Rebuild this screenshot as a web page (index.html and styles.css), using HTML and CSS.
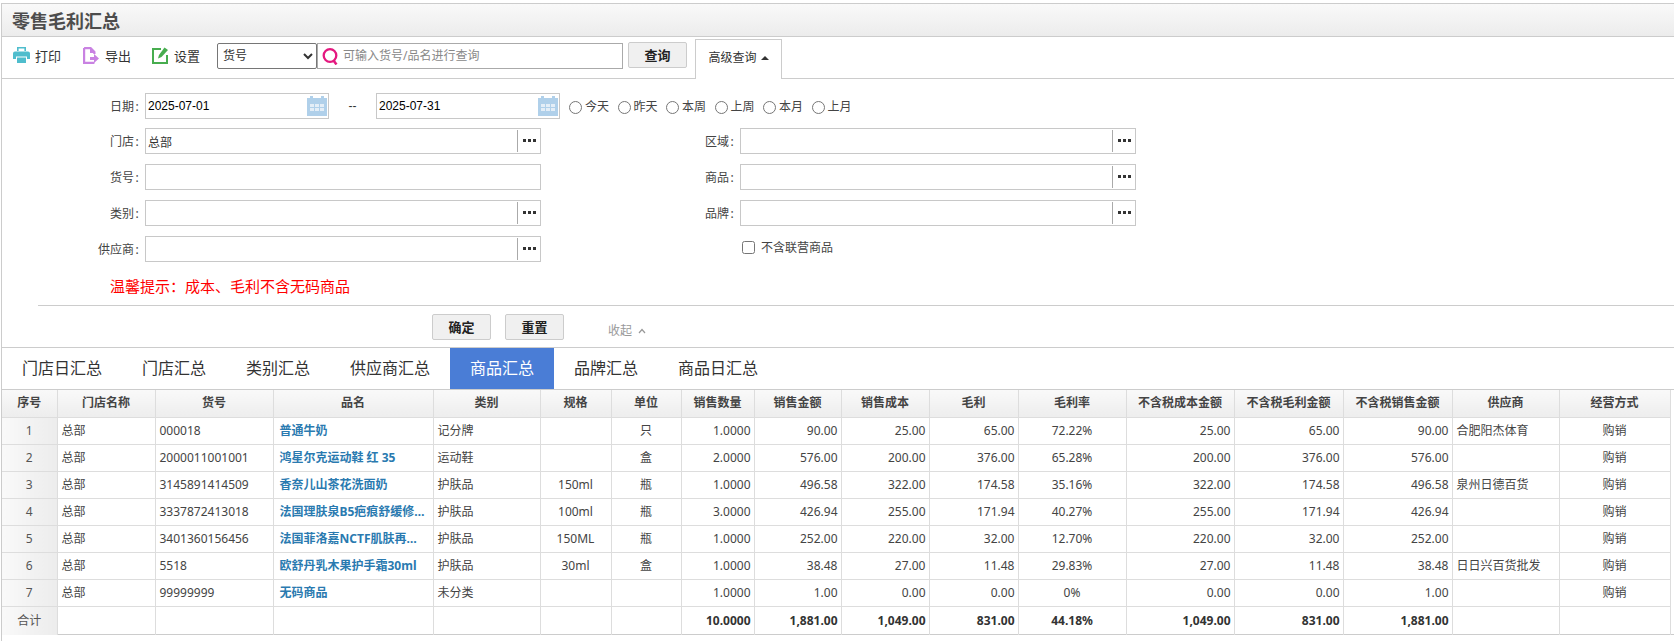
FILE: index.html
```html
<!DOCTYPE html>
<html lang="zh-CN">
<head>
<meta charset="utf-8">
<title>零售毛利汇总</title>
<link rel="stylesheet" href="styles.css">
</head>
<body>
<div class="page">
  <header class="title-bar"><h1 class="title">零售毛利汇总</h1></header>

  <div class="toolbar">
    <a class="tool tool-print">
      <svg class="tool-icon" width="17" height="16" viewBox="0 0 17 16"><path fill="#4fbdcd" d="M4 0h9v4h-1.600V1.500H5.600V4H4zM2 4.500h13a2 2 0 0 1 2 2V12h-3V9.500H3V12H0V6.500a2 2 0 0 1 2-2zM4 10.500h9V16H4z"/></svg>
      <span>打印</span>
    </a>
    <a class="tool tool-export">
      <svg class="tool-icon" width="16" height="17" viewBox="0 0 16 17"><path fill="none" stroke="#c982e2" stroke-width="2.200" d="M1.100 1.100h6.500l3.800 3.800v2M11.400 15.900H1.100V1.100"/><path fill="#c982e2" d="M7 1l5 5H7zM7 10h4V7l5 4.500-5 4.500v-3H7z"/></svg>
      <span>导出</span>
    </a>
    <a class="tool tool-set">
      <svg class="tool-icon" width="17" height="17" viewBox="0 0 17 17"><path fill="none" stroke="#47ad4f" stroke-width="2" d="M9 2H1v14h14V8"/><path fill="#47ad4f" d="M12.500.5L16 3 9.500 10 6 11.500 7 8z"/></svg>
      <span>设置</span>
    </a>
    <select class="search-type"><option>货号</option></select>
    <div class="search-box">
      <svg class="search-icon" width="17" height="17" viewBox="0 0 17 17"><circle cx="8" cy="7.500" r="6.300" fill="none" stroke="#e4187f" stroke-width="2.300"/><path d="M11.500 12.500l3 4" stroke="#e4187f" stroke-width="2.500" fill="none"/></svg>
      <input class="search-input" type="text" placeholder="可输入货号/品名进行查询">
    </div>
    <button class="btn btn-query">查询</button>
    <div class="adv-tab">高级查询<span class="caret"></span></div>
  </div>

  <form class="query">
    <div class="row row-date">
      <label class="lbl">日期<span class="colon">:</span></label>
      <div class="field field-date">
        <input class="text date-text" type="text" value="2025-07-01">
        <svg class="cal" width="20" height="20" viewBox="0 0 20 20"><path fill="#b0d0ea" d="M0 2h3V0h3v2h8V0h3v2h3v18H0z"/><path fill="#e4eef7" d="M3 8h4v3H3zM8 8h4v3H8zM13 8h4v3h-4zM3 12h4v3H3zM8 12h4v3H8zM13 12h4v3h-4z"/></svg>
      </div>
      <span class="dash">--</span>
      <div class="field field-date">
        <input class="text date-text" type="text" value="2025-07-31">
        <svg class="cal" width="20" height="20" viewBox="0 0 20 20"><path fill="#b0d0ea" d="M0 2h3V0h3v2h8V0h3v2h3v18H0z"/><path fill="#e4eef7" d="M3 8h4v3H3zM8 8h4v3H8zM13 8h4v3h-4zM3 12h4v3H3zM8 12h4v3H8zM13 12h4v3h-4z"/></svg>
      </div>
      <div class="quick">
        <label class="radio"><input type="radio" name="q"><span>今天</span></label>
        <label class="radio"><input type="radio" name="q"><span>昨天</span></label>
        <label class="radio"><input type="radio" name="q"><span>本周</span></label>
        <label class="radio"><input type="radio" name="q"><span>上周</span></label>
        <label class="radio"><input type="radio" name="q"><span>本月</span></label>
        <label class="radio"><input type="radio" name="q"><span>上月</span></label>
      </div>
    </div>

    <div class="row">
      <label class="lbl">门店<span class="colon">:</span></label>
      <div class="field field-wide"><input class="text" type="text" value="总部"><span class="more"><i></i><i></i><i></i></span></div>
      <label class="lbl lbl-right">区域<span class="colon">:</span></label>
      <div class="field field-wide"><input class="text" type="text"><span class="more"><i></i><i></i><i></i></span></div>
    </div>
    <div class="row">
      <label class="lbl">货号<span class="colon">:</span></label>
      <div class="field field-wide"><input class="text" type="text"></div>
      <label class="lbl lbl-right">商品<span class="colon">:</span></label>
      <div class="field field-wide"><input class="text" type="text"><span class="more"><i></i><i></i><i></i></span></div>
    </div>
    <div class="row">
      <label class="lbl">类别<span class="colon">:</span></label>
      <div class="field field-wide"><input class="text" type="text"><span class="more"><i></i><i></i><i></i></span></div>
      <label class="lbl lbl-right">品牌<span class="colon">:</span></label>
      <div class="field field-wide"><input class="text" type="text"><span class="more"><i></i><i></i><i></i></span></div>
    </div>
    <div class="row">
      <label class="lbl">供应商<span class="colon">:</span></label>
      <div class="field field-wide"><input class="text" type="text"><span class="more"><i></i><i></i><i></i></span></div>
      <label class="check"><input type="checkbox"><span>不含联营商品</span></label>
    </div>

    <p class="tip">温馨提示：成本、毛利不含无码商品</p>

    <div class="actions">
      <button class="btn btn-act" type="button">确定</button>
      <button class="btn btn-act" type="button">重置</button>
      <a class="collapse">收起<svg class="chev" width="8" height="6" viewBox="0 0 8 6"><path d="M1 5l3-3.500L7 5" fill="none" stroke="#999" stroke-width="1.200"/></svg></a>
    </div>
  </form>

  <nav class="tabs">
    <a class="tab">门店日汇总</a>
    <a class="tab">门店汇总</a>
    <a class="tab">类别汇总</a>
    <a class="tab">供应商汇总</a>
    <a class="tab active">商品汇总</a>
    <a class="tab">品牌汇总</a>
    <a class="tab">商品日汇总</a>
  </nav>

  <div class="grid-wrap">
  <table class="grid">
    <colgroup>
      <col class="c1"><col class="c2"><col class="c3"><col class="c4"><col class="c5"><col class="c6"><col class="c7"><col class="c8"><col class="c9"><col class="c10"><col class="c11"><col class="c12"><col class="c13"><col class="c14"><col class="c15"><col class="c16"><col class="c17">
    </colgroup>
    <thead>
      <tr><th>序号</th><th>门店名称</th><th>货号</th><th>品名</th><th>类别</th><th>规格</th><th>单位</th><th>销售数量</th><th>销售金额</th><th>销售成本</th><th>毛利</th><th>毛利率</th><th>不含税成本金额</th><th>不含税毛利金额</th><th>不含税销售金额</th><th>供应商</th><th>经营方式</th></tr>
    </thead>
    <tbody>
      <tr><td class="seq">1</td><td>总部</td><td>000018</td><td class="name">普通牛奶</td><td>记分牌</td><td class="ctr"></td><td class="ctr">只</td><td class="num">1.0000</td><td class="num">90.00</td><td class="num">25.00</td><td class="num">65.00</td><td class="ctr">72.22%</td><td class="num">25.00</td><td class="num">65.00</td><td class="num">90.00</td><td>合肥阳杰体育</td><td class="ctr">购销</td></tr>
      <tr><td class="seq">2</td><td>总部</td><td>2000011001001</td><td class="name">鸿星尔克运动鞋 红 35</td><td>运动鞋</td><td class="ctr"></td><td class="ctr">盒</td><td class="num">2.0000</td><td class="num">576.00</td><td class="num">200.00</td><td class="num">376.00</td><td class="ctr">65.28%</td><td class="num">200.00</td><td class="num">376.00</td><td class="num">576.00</td><td></td><td class="ctr">购销</td></tr>
      <tr><td class="seq">3</td><td>总部</td><td>3145891414509</td><td class="name">香奈儿山茶花洗面奶</td><td>护肤品</td><td class="ctr">150ml</td><td class="ctr">瓶</td><td class="num">1.0000</td><td class="num">496.58</td><td class="num">322.00</td><td class="num">174.58</td><td class="ctr">35.16%</td><td class="num">322.00</td><td class="num">174.58</td><td class="num">496.58</td><td>泉州日德百货</td><td class="ctr">购销</td></tr>
      <tr><td class="seq">4</td><td>总部</td><td>3337872413018</td><td class="name">法国理肤泉B5疤痕舒缓修…</td><td>护肤品</td><td class="ctr">100ml</td><td class="ctr">瓶</td><td class="num">3.0000</td><td class="num">426.94</td><td class="num">255.00</td><td class="num">171.94</td><td class="ctr">40.27%</td><td class="num">255.00</td><td class="num">171.94</td><td class="num">426.94</td><td></td><td class="ctr">购销</td></tr>
      <tr><td class="seq">5</td><td>总部</td><td>3401360156456</td><td class="name">法国菲洛嘉NCTF肌肤再…</td><td>护肤品</td><td class="ctr">150ML</td><td class="ctr">瓶</td><td class="num">1.0000</td><td class="num">252.00</td><td class="num">220.00</td><td class="num">32.00</td><td class="ctr">12.70%</td><td class="num">220.00</td><td class="num">32.00</td><td class="num">252.00</td><td></td><td class="ctr">购销</td></tr>
      <tr><td class="seq">6</td><td>总部</td><td>5518</td><td class="name">欧舒丹乳木果护手霜30ml</td><td>护肤品</td><td class="ctr">30ml</td><td class="ctr">盒</td><td class="num">1.0000</td><td class="num">38.48</td><td class="num">27.00</td><td class="num">11.48</td><td class="ctr">29.83%</td><td class="num">27.00</td><td class="num">11.48</td><td class="num">38.48</td><td>日日兴百货批发</td><td class="ctr">购销</td></tr>
      <tr><td class="seq">7</td><td>总部</td><td>99999999</td><td class="name">无码商品</td><td>未分类</td><td class="ctr"></td><td class="ctr"></td><td class="num">1.0000</td><td class="num">1.00</td><td class="num">0.00</td><td class="num">0.00</td><td class="ctr">0%</td><td class="num">0.00</td><td class="num">0.00</td><td class="num">1.00</td><td></td><td class="ctr">购销</td></tr>
    </tbody>
    <tfoot>
      <tr><td class="seq">合计</td><td></td><td></td><td></td><td></td><td></td><td></td><td class="num">10.0000</td><td class="num">1,881.00</td><td class="num">1,049.00</td><td class="num">831.00</td><td class="ctr">44.18%</td><td class="num">1,049.00</td><td class="num">831.00</td><td class="num">1,881.00</td><td></td><td></td></tr>
    </tfoot>
  </table>
  </div>
</div>
</body>
</html>
```
FILE: styles.css
```css
* { box-sizing: border-box; }
html, body { margin: 0; padding: 0; background: #fff; }
body {
  font-family: "Noto Sans", "Noto Sans CJK SC", sans-serif;
  font-size: 12px;
  color: #444;
  overflow: hidden;
}
.page {
  margin: 3px 0 0 1px;
  border-left: 1px solid #ccc;
  height: 638px;
}

/* title */
.title-bar {
  height: 34px;
  margin-left: -1px;
  border-top: 1px solid #ccc;
  border-bottom: 1px solid #ccc;
  border-left: 1px solid #ccc;
  background: linear-gradient(#f9f9f9, #ececec);
  padding-left: 10px;
}
.title {
  margin: 0;
  font-size: 18px;
  line-height: 34px;
  font-weight: 700;
  color: #4d4d4d;
}

/* toolbar */
.toolbar {
  height: 42px;
  border-bottom: 1px solid #ccc;
  display: flex;
  align-items: flex-start;
  position: relative;
}
.tool {
  display: flex;
  align-items: center;
  height: 20px;
  margin-top: 8px;
  font-size: 13px;
  color: #333;
}
.tool-print { margin-left: 11px; }
.tool-export { margin-left: 22px; }
.tool-set { margin-left: 21px; }
.tool-icon { flex: none; margin-right: 5px; }
.tool-export .tool-icon { margin-right: 6px; }
.search-type {
  width: 100px;
  height: 26px;
  margin: 6px 0 0 17px;
  font-family: inherit;
  font-size: 12px;
  color: #333;
  background: #fff;
  border: 1px solid #767676;
  border-radius: 2px;
  padding: 0 0 2px 1px;
}
.search-box {
  width: 306px;
  height: 26px;
  margin-top: 6px;
  border: 1px solid #aaa;
  display: flex;
  align-items: center;
  background: #fff;
}
.search-icon { flex: none; margin: 0 4px 0 4px; }
.search-input {
  flex: 1;
  min-width: 0;
  border: 0;
  outline: 0;
  padding: 0 0 1px;
  font-family: inherit;
  font-size: 12px;
}
.search-input::placeholder { color: #888; opacity: 1; }
.btn {
  font-family: inherit;
  font-weight: 700;
  color: #222;
  background: #f0f0f0;
  border: 1px solid #ccc;
  border-radius: 2px;
  padding: 0 0 2px;
  cursor: pointer;
}
.btn-query {
  width: 59px;
  height: 26px;
  margin: 5px 0 0 5px;
  font-size: 13px;
}
.adv-tab {
  width: 87px;
  height: 40px;
  margin: 2px 0 -1px 8px;
  border: 1px solid #ccc;
  border-bottom: 0;
  background: #fff;
  color: #333;
  font-size: 12px;
  line-height: 36px;
  text-align: center;
  white-space: nowrap;
}
.caret {
  display: inline-block;
  width: 0;
  height: 0;
  margin-left: 4px;
  vertical-align: 2px;
  border-left: 4px solid transparent;
  border-right: 4px solid transparent;
  border-bottom: 4px solid #333;
}

/* form */
.query { padding-top: 14px; border-bottom: 1px solid #ccc; height: 269px; }
.row {
  display: flex;
  align-items: center;
  height: 26px;
  margin-bottom: 10px;
}
.row-date { margin-bottom: 9px; }
.lbl {
  width: 138px;
  margin-right: 5px;
  text-align: right;
  flex: none;
  color: #444;
}
.lbl-right { width: 194px; }
.colon { display: inline-block; width: 6px; text-align: center; }
.field {
  position: relative;
  display: flex;
  align-items: center;
  height: 26px;
  border: 1px solid #c8c8c8;
  background: #fff;
  flex: none;
}
.field-wide { width: 396px; }
.field-date { width: 184px; }
.text {
  flex: 1;
  min-width: 0;
  height: 24px;
  border: 0;
  outline: 0;
  padding: 2px 0 0 2px;
  font-family: inherit;
  font-size: 12px;
  color: #333;
  background: transparent;
}
.date-text {
  font-family: "Liberation Sans", sans-serif;
  color: #000;
  padding: 0 0 0 2px;
}
.cal { flex: none; margin: 0 1px 0 0; }
.more {
  flex: none;
  width: 23px;
  height: 22px;
  border-left: 1px solid #aaa;
  margin-bottom: 1px;
  display: flex;
  align-items: center;
  justify-content: center;
  gap: 2px;
}
.more i { display: block; width: 3px; height: 3px; background: #333; }
.dash {
  width: 47px;
  text-align: center;
  flex: none;
  color: #333;
  font-family: "Liberation Sans", sans-serif;
}
.quick { display: flex; margin-left: 9px; }
.radio {
  display: flex;
  align-items: center;
  width: 48.5px;
  color: #444;
}
.radio input { margin: 3px 3px 0 0; width: 13px; height: 13px; flex: none; }
.check {
  display: flex;
  align-items: center;
  margin: -4px 0 0 201px;
  color: #444;
}
.check input { margin: 0 6px 0 0; width: 13px; height: 13px; }
.tip {
  margin: 14px 0 0 108px;
  height: 20px;
  line-height: 20px;
  font-size: 15px;
  color: #f00;
}
.actions {
  margin: 9px 0 0 36px;
  padding-top: 8px;
  border-top: 1px solid #ccc;
  display: flex;
  align-items: flex-start;
  padding-left: 394px;
}
.btn-act { width: 59px; height: 26px; font-size: 13px; margin-right: 14px; }
.collapse {
  margin: 8px 0 0 30px;
  color: #999;
  line-height: 18px;
  display: flex;
  align-items: center;
}
.chev { margin-left: 6px; }

/* tabs */
.tabs { display: flex; height: 42px; border-bottom: 1px solid #ccc; }
.tab {
  padding: 0 20px;
  font-size: 16px;
  line-height: 41px;
  color: #333;
}
.tab.active { background: #4a7dd6; color: #fff; }

/* table */
.grid-wrap { border-bottom: 1px solid #ccc; height: 245px; }
.grid {
  width: 1668px;
  table-layout: fixed;
  border-collapse: collapse;
}
.c1 { width: 55px; } .c2 { width: 98px; } .c3 { width: 118px; } .c4 { width: 160px; }
.c5 { width: 107px; } .c6 { width: 71px; } .c7 { width: 70px; } .c8 { width: 73px; }
.c9 { width: 87px; } .c10 { width: 88px; } .c11 { width: 89px; } .c12 { width: 108px; }
.c13 { width: 108px; } .c14 { width: 109px; } .c15 { width: 109px; } .c16 { width: 107px; }
.c17 { width: 111px; }
.grid th, .grid td {
  height: 27px;
  padding: 0 4px;
  border: 1px solid #ddd;
  font-size: 12px;
  line-height: 16px;
  white-space: nowrap;
  overflow: hidden;
  text-align: left;
  color: #444;
}
.grid thead tr:first-child th { border-top: 0; }
.grid tr > :first-child { border-left: 0; }
.grid th {
  text-align: center;
  font-weight: 700;
  color: #444;
  background: linear-gradient(#f9f9f9, #ededed);
}
.grid .seq {
  text-align: center;
  background: linear-gradient(90deg, #f9f9f9, #ececec);
  color: #555;
}
.grid .name { font-weight: 700; color: #2a7ab0; padding-left: 6px; }
.grid .ctr { text-align: center; }
.grid .num { text-align: right; padding-right: 3px; }
.grid tfoot td { height: 29px; font-weight: 700; color: #333; border-bottom: 0; }
.grid tfoot .seq { font-weight: 400; color: #555; }
```
